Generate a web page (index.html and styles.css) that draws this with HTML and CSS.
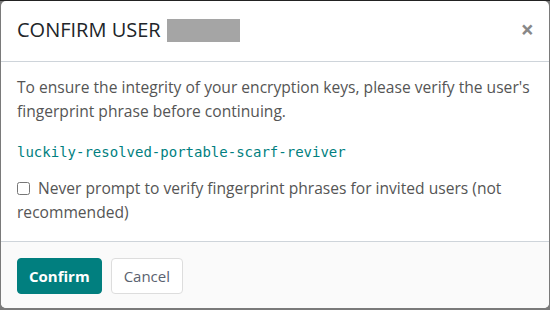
FILE: index.html
```html
<!DOCTYPE html>
<html>
<head>
<meta charset="utf-8">
<link rel="stylesheet" href="styles.css">
</head>
<body>
<div class="backdrop">
  <div class="modal">
    <div class="modal-header">
      <h2 class="modal-title">CONFIRM USER <span class="redacted"></span></h2>
      <button class="close" aria-label="Close">&times;</button>
    </div>
    <div class="modal-body">
      <p class="lead">To ensure the integrity of your encryption keys, please verify the user's fingerprint phrase before continuing.</p>
      <p class="phrase">luckily-resolved-portable-scarf-reviver</p>
      <label class="check"><input type="checkbox"> Never prompt to verify fingerprint phrases for invited users (not recommended)</label>
    </div>
    <div class="modal-footer">
      <button class="btn btn-primary">Confirm</button>
      <button class="btn btn-outline">Cancel</button>
    </div>
  </div>
</div>
</body>
</html>
```

FILE: styles.css
```css
html, body {
  margin: 0;
  padding: 0;
  background: #555;
}
.backdrop {
  width: 550px;
  height: 310px;
  padding: 0 1px 2px 1px;
  box-sizing: border-box;
  background: #7a7a7a;
  border-top: 1px solid #222;
}
.modal {
  background: #fff;
  border-radius: 5px;
  font-family: "Open Sans", sans-serif;
  color: #333;
  overflow: hidden;
  height: 100%;
  display: flex;
  flex-direction: column;
}
.modal-header {
  display: flex;
  align-items: flex-start;
  justify-content: space-between;
  padding: 14px 16px 16px;
  border-bottom: 1px solid #ced4da;
}
.modal-title {
  margin: 0;
  font-size: 20px;
  font-weight: 400;
  line-height: 30px;
  color: #212529;
  display: flex;
  align-items: center;
  gap: 6px;
}
.redacted {
  display: inline-block;
  width: 73px;
  height: 23px;
  background: #a5a5a5;
}
.close {
  border: 0;
  background: none;
  font-family: "Open Sans", sans-serif;
  font-size: 23px;
  font-weight: 700;
  color: #888;
  padding: 0;
  line-height: 1;
  margin: 3px -1px 0 0;
}
.modal-body {
  padding: 13px 12px 15px 16px;
  font-size: 15.6px;
  line-height: 24px;
  color: #555;
  flex: 1;
}
.lead {
  margin: 0 0 17px;
}
.phrase {
  margin: 0 0 12px;
  font-family: "DejaVu Sans Mono", monospace;
  font-size: 14px;
  color: #017f80;
}
.check {
  display: block;
}
.check input {
  margin: 0 4px 0 0;
  width: 13px;
  height: 13px;
  vertical-align: -1px;
}
.modal-footer {
  display: flex;
  gap: 9px;
  padding: 16px 16px 14px;
  background: #fafafa;
  border-top: 1px solid #ced4da;
}
.btn {
  font-family: "Open Sans", sans-serif;
  font-size: 15px;
  line-height: 22px;
  padding: 6px 12px;
  border-radius: 4px;
  border: 1px solid transparent;
}
.btn-primary {
  background: #017f7f;
  color: #fff;
  font-weight: 700;
  border-color: #017f7f;
  padding: 6px 11px;
}
.btn-outline {
  background: #fff;
  color: #5a6270;
  border-color: #ddd;
}
```
